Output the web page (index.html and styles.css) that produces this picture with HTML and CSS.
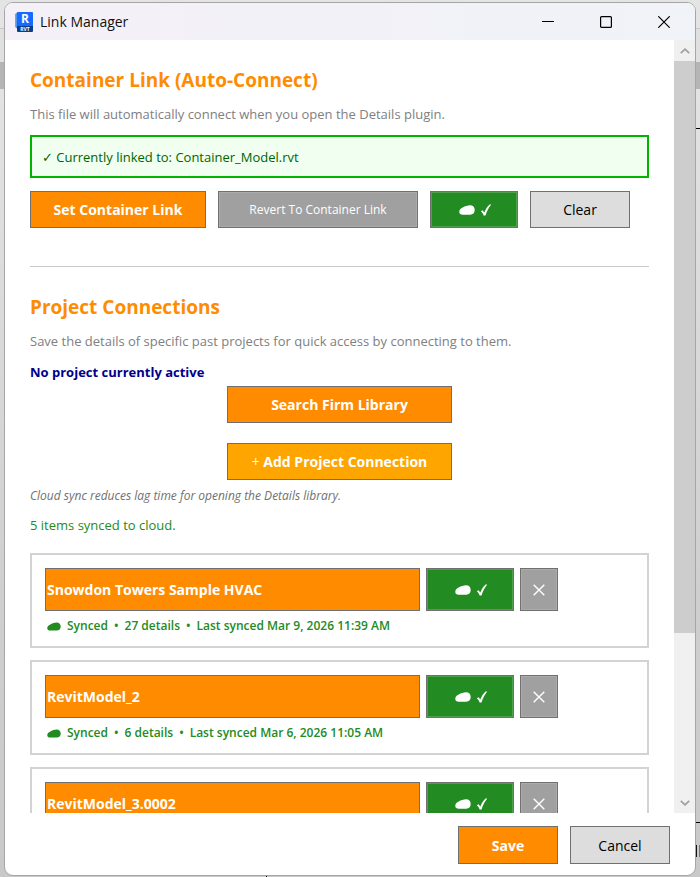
FILE: index.html
```html
<!DOCTYPE html>
<html lang="en">
<head>
    <meta charset="UTF-8">
    <meta name="viewport" content="width=device-width, initial-scale=1.0">
    <title>Link Manager</title>
    <link rel="stylesheet" href="styles.css">
</head>
<body>
    <!-- shared icons -->
    <svg class="sprite" aria-hidden="true">
        <symbol id="icon-cloud" viewBox="0 0 16 10">
            <path d="M4 9.700C1.500 9.700.3 8.600.3 6.900.3 4.800 1.700 3.500 3.700 2.600 6 1.200 8.500.3 11 .3 14 .3 15.700 2.200 15.700 5 15.700 7.900 13.900 9.700 11.200 9.700Z" fill="currentColor"/>
        </symbol>
        <symbol id="icon-check" viewBox="0 0 12 12">
            <path d="M.8 7.300 2.600 6.200 4.300 8.600C5.600 5.400 7.300 2.700 9.500.6L11.200.6C8.700 3.700 6.900 7.200 5.500 11.400L3.600 11.400C2.900 9.600 2 8.200.8 7.300Z" fill="currentColor"/>
        </symbol>
        <symbol id="icon-cross" viewBox="0 0 12 12">
            <path d="M.7.7 11.300 11.300M11.300.7.7 11.300" fill="none" stroke="currentColor" stroke-width="1.400"/>
        </symbol>
    </svg>

    <div class="window">
        <header class="title-bar">
            <svg class="app-icon" viewBox="0 0 18 20" aria-hidden="true">
                <path d="M0 2 3 0V17L0 15Z" fill="#6aa5ee"/>
                <path d="M1.500 1H4V18L1.500 16Z" fill="#3c84ea"/>
                <rect x="2" width="16" height="15" rx="1" fill="#1769ff"/>
                <path d="M2 14H18V19Q18 20 17 20H3Q2 20 2 19Z" fill="#0c3c8c"/>
                <text x="10" y="11" class="app-letter">R</text>
                <text x="10" y="19" class="app-type">RVT</text>
            </svg>
            <h1 class="title">Link Manager</h1>
            <div class="window-controls">
                <button class="window-btn" aria-label="Minimize">
                    <svg viewBox="0 0 12 12"><path d="M0 5.500H12" stroke="#000"/></svg>
                </button>
                <button class="window-btn" aria-label="Maximize">
                    <svg viewBox="0 0 12 12"><rect x=".6" y=".6" width="10.800" height="10.800" rx="1" fill="none" stroke="#000" stroke-width="1.200"/></svg>
                </button>
                <button class="window-btn" aria-label="Close">
                    <svg viewBox="0 0 12 12"><path d="M.3.300 11.700 11.700M11.700.3.300 11.700" stroke="#000" stroke-width="1.200"/></svg>
                </button>
            </div>
        </header>

        <div class="main">
            <main class="content">
                <!-- container link -->
                <section class="section container-section">
                    <h2 class="heading">Container Link (Auto-Connect)</h2>
                    <p class="description">This file will automatically connect when you open the Details plugin.</p>
                    <p class="linked-box">✓ Currently linked to: Container_Model.rvt</p>
                    <div class="button-row">
                        <button class="btn btn-orange btn-set">Set Container Link</button>
                        <button class="btn btn-gray btn-revert">Revert To Container Link</button>
                        <button class="btn btn-green btn-sync" aria-label="Synced to cloud">
                            <svg class="cloud"><use href="#icon-cloud"/></svg>
                            <svg class="check"><use href="#icon-check"/></svg>
                        </button>
                        <button class="btn btn-light">Clear</button>
                    </div>
                </section>

                <!-- project connections -->
                <section class="section">
                    <h2 class="heading">Project Connections</h2>
                    <p class="description">Save the details of specific past projects for quick access by connecting to them.</p>
                    <p class="active-project">No project currently active</p>
                    <div class="project-actions">
                        <button class="btn btn-orange btn-wide">Search Firm Library</button>
                        <button class="btn btn-amber btn-wide"><span class="plus">+</span> Add Project Connection</button>
                    </div>
                    <p class="hint">Cloud sync reduces lag time for opening the Details library.</p>
                    <p class="sync-count">5 items synced to cloud.</p>

                    <div class="card-list">
                        <article class="card">
                            <div class="card-row">
                                <button class="btn btn-orange btn-project">Snowdon Towers Sample HVAC</button>
                                <button class="btn btn-green btn-sync" aria-label="Synced to cloud">
                                    <svg class="cloud"><use href="#icon-cloud"/></svg>
                                    <svg class="check"><use href="#icon-check"/></svg>
                                </button>
                                <button class="btn btn-gray btn-remove" aria-label="Remove">
                                    <svg class="cross"><use href="#icon-cross"/></svg>
                                </button>
                            </div>
                            <p class="status">
                                <svg class="cloud"><use href="#icon-cloud"/></svg>
                                <span>Synced</span><span>•</span><span>27 details</span><span>•</span><span>Last synced Mar 9, 2026 11:39 AM</span>
                            </p>
                        </article>

                        <article class="card">
                            <div class="card-row">
                                <button class="btn btn-orange btn-project">RevitModel_2</button>
                                <button class="btn btn-green btn-sync" aria-label="Synced to cloud">
                                    <svg class="cloud"><use href="#icon-cloud"/></svg>
                                    <svg class="check"><use href="#icon-check"/></svg>
                                </button>
                                <button class="btn btn-gray btn-remove" aria-label="Remove">
                                    <svg class="cross"><use href="#icon-cross"/></svg>
                                </button>
                            </div>
                            <p class="status">
                                <svg class="cloud"><use href="#icon-cloud"/></svg>
                                <span>Synced</span><span>•</span><span>6 details</span><span>•</span><span>Last synced Mar 6, 2026 11:05 AM</span>
                            </p>
                        </article>

                        <article class="card">
                            <div class="card-row">
                                <button class="btn btn-orange btn-project">RevitModel_3.0002</button>
                                <button class="btn btn-green btn-sync" aria-label="Synced to cloud">
                                    <svg class="cloud"><use href="#icon-cloud"/></svg>
                                    <svg class="check"><use href="#icon-check"/></svg>
                                </button>
                                <button class="btn btn-gray btn-remove" aria-label="Remove">
                                    <svg class="cross"><use href="#icon-cross"/></svg>
                                </button>
                            </div>
                        </article>
                    </div>
                </section>
            </main>

            <div class="scrollbar">
                <button class="scroll-btn" aria-label="Scroll up">
                    <svg viewBox="0 0 10 6"><path d="M.8 5.200 5 1.200 9.200 5.200" fill="none" stroke="#a0a0a0" stroke-width="1.800"/></svg>
                </button>
                <div class="scroll-track"><div class="scroll-thumb"></div></div>
                <button class="scroll-btn" aria-label="Scroll down">
                    <svg viewBox="0 0 10 6"><path d="M.8.800 5 4.800 9.200.8" fill="none" stroke="#a0a0a0" stroke-width="1.800"/></svg>
                </button>
            </div>
        </div>

        <footer class="footer">
            <button class="btn btn-orange">Save</button>
            <button class="btn btn-light">Cancel</button>
        </footer>
    </div>
</body>
</html>
```

FILE: styles.css
```css
* {
    margin: 0;
    padding: 0;
    box-sizing: border-box;
}

/* the app behind the dialog shows at the edges */
body {
    height: 100vh;
    padding: 2px 4px 1px;
    overflow: hidden;
    font-family: 'Open Sans', 'DejaVu Sans', sans-serif;
    font-size: 13px;
    line-height: 18px;
    background:
        linear-gradient(#000, #000) 266px 100% / 1px 2px no-repeat,
        linear-gradient(#000, #000) 100% 128px / 5px 1px no-repeat,
        linear-gradient(#000, #000) 100% 822px / 5px 1px no-repeat,
        linear-gradient(90deg, #111 0 1px, #ccc 1px 3px, #777 3px) 100% 845px / 4px 12px no-repeat,
        linear-gradient(#e4e4e4 0 28px, #c8c8c8 28px 29px, #e0e0e0 29px 62px, #b5b5b5 62px 89px, #e3e3e3 89px, #cfcfcf 600px, #c9c9c9);
}

.sprite {
    position: absolute;
    width: 0;
    height: 0;
}

.window {
    height: 100%;
    display: flex;
    flex-direction: column;
    border: 1px solid #a6a6a6;
    border-radius: 9px;
    background: #fff;
    overflow: hidden;
}

/* title bar */
.title-bar {
    display: flex;
    align-items: center;
    height: 37px;
    flex-shrink: 0;
    padding-left: 10px;
    background: linear-gradient(90deg, #f5f0f8, #f0f3f8);
}

.app-icon {
    width: 18px;
    height: 20px;
    margin-right: 7px;
}

.app-letter {
    font-size: 12px;
    font-weight: 700;
    fill: #fff;
    text-anchor: middle;
}

.app-type {
    font-size: 5px;
    font-weight: 700;
    fill: #fff;
    text-anchor: middle;
}

.title {
    font-size: 14px;
    font-weight: 400;
    color: #111;
}

.window-controls {
    display: flex;
    margin: 0 2px 0 auto;
}

.window-btn {
    display: flex;
    align-items: center;
    justify-content: center;
    width: 58px;
    height: 37px;
    border: none;
    background: none;
}

.window-btn svg {
    width: 12px;
    height: 12px;
}

/* scrolling area */
.main {
    flex: 1;
    min-height: 0;
    display: flex;
}

.content {
    flex: 1;
    min-width: 0;
    overflow: hidden;
    padding: 26px 25px 0;
}

.scrollbar {
    display: flex;
    flex-direction: column;
    width: 21px;
    background: #f0f0f0;
}

.scroll-btn {
    display: flex;
    align-items: center;
    justify-content: center;
    height: 21px;
    border: none;
    background: #f0f0f0;
}

.scroll-btn svg {
    width: 10px;
    height: 6px;
}

.scroll-track {
    flex: 1;
}

.scroll-thumb {
    height: 78.3%;
    background: #cdcdcd;
}

/* sections */
.container-section {
    padding-bottom: 38px;
    margin-bottom: 26px;
    border-bottom: 1px solid #c8c8c8;
}

.heading {
    margin-bottom: 11px;
    font-size: 19px;
    line-height: 28px;
    color: #ff8c00;
}

.description {
    color: #808080;
}

.linked-box {
    margin: 12px 0 13px;
    padding: 11px 10px 10px;
    border: 2px solid #00b400;
    background: #f0fff0;
    color: #006400;
}

.button-row {
    display: flex;
    gap: 12px;
}

/* buttons */
.btn {
    display: flex;
    align-items: center;
    justify-content: center;
    width: 100px;
    height: 37px;
    border: 1px solid #707070;
    font-family: inherit;
    font-size: 14px;
    white-space: pre;
}

.btn-orange,
.btn-amber {
    background: #ff8c00;
    color: #fff;
    font-weight: 700;
}

.btn-amber {
    background: #ffa500;
}

.btn-gray {
    background: #a0a0a0;
    color: #fff;
    box-shadow: inset 0 0 0 1px #ababab;
}

.btn-green {
    background: #228b22;
    color: #fff;
    box-shadow: inset 0 0 0 1px #4f9f4f;
}

.btn-light {
    background: #ddd;
    color: #000;
}

.btn-set {
    width: 176px;
}

.btn-revert {
    width: 200px;
    font-size: 12px;
}

.btn-sync {
    width: 88px;
    padding-left: 2px;
    gap: 5px;
}

.btn-wide {
    width: 225px;
}

.plus {
    font-weight: 400;
}

.cloud {
    width: 16px;
    height: 10px;
}

.check,
.cross {
    width: 12px;
    height: 12px;
}

/* project connections */
.active-project {
    margin-top: 13px;
    color: #00008b;
    font-weight: 700;
}

.project-actions {
    display: flex;
    flex-direction: column;
    align-items: center;
    gap: 20px;
    margin: 5px 0 7px;
}

.hint {
    font-size: 12px;
    font-style: italic;
    color: #707070;
}

.sync-count {
    margin: 11px 0 19px;
    color: #228b22;
}

.card-list {
    display: flex;
    flex-direction: column;
    gap: 12px;
}

.card {
    height: 95px;
    padding: 13px;
    border: 2px solid #d3d3d3;
}

.card-row {
    display: flex;
    gap: 6px;
}

.card-row .btn {
    height: 43px;
}

.btn-project {
    width: 375px;
    padding-left: 1px;
    justify-content: flex-start;
}

.btn-remove {
    width: 38px;
}

.status {
    display: flex;
    align-items: center;
    gap: 6px;
    margin-top: 6px;
    padding-left: 2px;
    font-size: 12px;
    font-weight: 600;
    color: #228b22;
}

.status .cloud {
    width: 14px;
    height: 9px;
}

/* footer */
.footer {
    display: flex;
    justify-content: flex-end;
    gap: 12px;
    padding: 13px 25px 11px;
}

.footer .btn {
    height: 38px;
}
```
